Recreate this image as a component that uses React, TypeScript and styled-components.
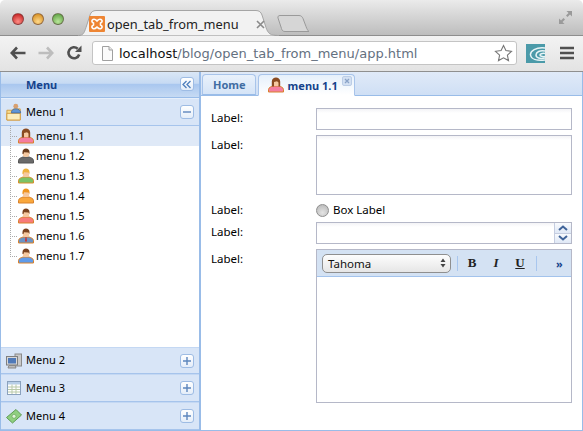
import React from "react";
import styled, { createGlobalStyle } from "styled-components";

const Global = createGlobalStyle`
  html, body { margin: 0; padding: 0; background: #fff; }
  * { box-sizing: border-box; }
`;

const UI = `"DejaVu Sans", Verdana, sans-serif`;
const TAHOMA = `"Noto Sans", "DejaVu Sans", sans-serif`;

const Page = styled.div`
  width: 583px; height: 431px; overflow: hidden; display: flex; flex-direction: column;
  background: #fff; font-family: ${TAHOMA};
`;
const TitleBar = styled.div`
  height: 36px; flex: none; display: flex; align-items: flex-end; padding-left: 10px;
  background: linear-gradient(#ebebeb, #d8d8d8 40%, #bdbdbd);
  border-bottom: 1px solid #8e8e8e; border-radius: 5px 5px 0 0;
`;
const Lights = styled.div`
  display: flex; gap: 8px; width: 66px; align-self: flex-start; margin: 13px 0 0 2px; flex: none;
`;
const Light = styled.span<{ $c: string; $d: string }>`
  width: 12px; height: 12px; border-radius: 50%;
  background: radial-gradient(circle at 50% 75%, ${p => p.$c}, ${p => p.$d} 80%);
  border: 1px solid rgba(90, 60, 60, .55);
`;
const Tab = styled.div`
  position: relative; width: 201px; height: 26px; flex: none; margin-bottom: -1px;
  display: flex; align-items: center; padding: 2px 14px 0 11px;
  font-size: 12.8px; color: #222;
`;
const Shape = styled.svg`
  position: absolute; left: 0; top: 0;
`;
const TabTitle = styled.span`
  position: relative; flex: 1; margin-left: 2px; white-space: nowrap;
`;
const TabIcon = styled.svg`
  position: relative; flex: none;
`;
const NewTab = styled.svg`
  flex: none; margin: 0 0 3px -2px;
`;
const Spacer = styled.div`flex: 1;`;
const FullIcon = styled.svg`
  align-self: flex-start; margin: 10px 10px 0 0; flex: none;
`;
const Toolbar = styled.div`
  height: 36px; flex: none; display: flex; align-items: center; padding: 0 10px 1px 10px;
  background: linear-gradient(#f3f3f3, #e3e3e3); border-bottom: 1px solid #8f8f8f;
`;
const NavIcon = styled.svg`
  flex: none; margin-right: 12px;
`;
const Address = styled.div`
  width: 425px; height: 24px; margin-left: -2px; flex: none; display: flex; align-items: center;
  background: #fff; border: 1px solid #c4c4c4; border-radius: 3px; padding: 0 3px 0 8px;
  font-family: ${UI}; font-size: 13px; color: #64707f; white-space: nowrap;
`;
const Host = styled.span`color: #111;`;
const Url = styled.span`flex: 1; margin-left: 5px;`;
const Ext = styled.svg`
  margin-left: 9px; flex: none;
`;
const Burger = styled.svg`
  margin-left: 15px; flex: none;
`;
const Main = styled.div`
  flex: 1; display: flex; min-height: 0;
`;
const Sidebar = styled.aside`
  width: 200px; flex: none; display: flex; flex-direction: column;
  border: 1px solid #99bce8; border-width: 0 1px 1px 1px;
`;
const SideHead = styled.div`
  height: 26px; flex: none; display: flex; align-items: center; justify-content: space-between;
  padding: 0 5px 1px 25px; font-weight: bold; font-size: 11px; color: #15428b;
  background: linear-gradient(#dae7f6, #c6daf3 45%, #a9c7ef 50%, #c6daf3);
  border-bottom: 1px solid #99bce8;
`;
const ToolBtn = styled.span`
  width: 14px; height: 14px; flex: none; display: flex; align-items: center; justify-content: center;
  background: linear-gradient(#fff, #e4edf9); border: 1px solid #9ebce4; border-radius: 3px;
`;
const Accordion = styled.div<{ $top?: boolean; $h: number }>`
  height: ${p => p.$h}px; flex: none; display: flex; align-items: center;
  padding: 0 5px 0 5px; font-size: 11px; color: #000;
  background: #d8e5f7; border-bottom: 1px solid #a6c4ec;
  border-top: 1px solid ${p => (p.$top ? "#e6effb" : "#c4d8f3")};
`;
const AccTitle = styled.span`flex: 1; margin-left: 4px; padding-bottom: 2px;`;
const Tree = styled.ul`
  flex: 1; list-style: none; margin: 0; padding: 0;
`;
const TreeRow = styled.li<{ $sel?: boolean }>`
  height: 20px; display: flex; align-items: center; padding-left: 9px; font-size: 11px; color: #000;
  background: ${p => (p.$sel ? "#dfe9f7" : "transparent")};
`;
const Elbow = styled.span<{ $last?: boolean }>`
  align-self: flex-start; flex: none; width: 8px; height: ${p => (p.$last ? 11 : 20)}px;
  background:
    repeating-linear-gradient(to bottom, #aaa 0 1px, transparent 1px 2px) left top / 1px 100% no-repeat,
    repeating-linear-gradient(to right, #aaa 0 1px, transparent 1px 2px) left 10px / 100% 1px no-repeat;
`;
const TreeText = styled.span`margin-left: 2px; padding-bottom: 2px;`;
const Content = styled.section`
  flex: 1; display: flex; flex-direction: column; min-width: 0;
  border: 1px solid #99bce8; border-width: 0 1px 1px 1px;
`;
const TabBar = styled.div`
  height: 24px; flex: none; display: flex; align-items: flex-end; gap: 2px; padding-left: 1px;
  background: linear-gradient(#e0eaf8, #cfdff5); border-bottom: 1px solid #99bce8;
`;
const PanelTab = styled.div<{ $active?: boolean }>`
  height: ${p => (p.$active ? 22 : 21)}px; margin-bottom: ${p => (p.$active ? -1 : 0)}px;
  display: flex; align-items: center; padding: ${p => (p.$active ? "0 2px 0 9px" : "0 9px 0 10px")};
  border: 1px solid #a8c4ea; border-bottom-color: ${p => (p.$active ? "#fff" : "#99bce8")};
  border-radius: 4px 4px 0 0; font-weight: bold; font-size: 11px;
  color: ${p => (p.$active ? "#15428b" : "#416da3")};
  background: ${p => (p.$active ? "linear-gradient(#e6f0fb, #fff)" : "linear-gradient(#e9f1fb, #d5e4f7)")};
`;
const PanelTabText = styled.span`margin-left: 4px;`;
const Close = styled.span`
  width: 10px; height: 10px; margin: -8px 0 0 4px; flex: none; display: flex; align-items: center; justify-content: center;
  background: #d3e0f2; border: 1px solid #bccde6; border-radius: 2px;
`;
const Form = styled.div`
  flex: 1; display: flex; flex-direction: column; gap: 5px; padding: 12px 10px 0 10px;
`;
const Row = styled.div`
  display: flex; align-items: flex-start;
`;
const Label = styled.label<{ $top: number }>`
  width: 105px; flex: none; font-size: 11.5px; line-height: 14px; color: #000; padding-top: ${p => p.$top}px;
`;
const Input = styled.div<{ $h: number }>`
  flex: 1; height: ${p => p.$h}px; border: 1px solid #b5b8c8;
  background: linear-gradient(#f3f3f6, #fff 4px);
`;
const RadioWrap = styled.div`
  display: flex; align-items: center; height: 17px; font-size: 11.5px; color: #000;
`;
const Radio = styled.span`
  width: 13px; height: 13px; border-radius: 50%; margin: 3px 4px 0 0;
  border: 1px solid #8e8e8e; background: radial-gradient(circle at 50% 70%, #e4e4e4, #b4b4b4);
`;
const RadioText = styled.span`padding-top: 1px;`;
const Spinner = styled.div`
  flex: 1; height: 22px; display: flex; border: 1px solid #b5b8c8;
  background: linear-gradient(#f3f3f6, #fff 4px);
`;
const SpinField = styled.div`flex: 1;`;
const SpinBtns = styled.div`
  width: 17px; display: flex; flex-direction: column; border-left: 1px solid #c5cde0;
`;
const SpinBtn = styled.span`
  flex: 1; display: flex; align-items: center; justify-content: center;
  background: linear-gradient(#f8fafd, #dfe8f6);
  & + & { border-top: 1px solid #c5cde0; }
`;
const Editor = styled.div`
  flex: 1; height: 154px; display: flex; flex-direction: column; border: 1px solid #b5b8c8;
`;
const EdBar = styled.div`
  height: 27px; flex: none; display: flex; align-items: center; padding: 0 5px;
  background: #d4e2f3; border-bottom: 1px solid #a3c3ec;
`;
const FontSelect = styled.div`
  width: 129px; height: 19px; flex: none; display: flex; align-items: center; justify-content: space-between;
  padding: 0 4px 0 5px; font-size: 11.5px; color: #111;
  background: linear-gradient(#fdfdfd, #e6e6e6); border: 1px solid #8f8f8f; border-radius: 5px;
`;
const Sep = styled.span<{ $l: number; $r: number }>`
  width: 1px; height: 15px; flex: none; background: #a8c6ee; margin: 0 ${p => p.$r}px 0 ${p => p.$l}px;
`;
const FmtBtn = styled.span<{ $i?: boolean; $u?: boolean }>`
  width: 24px; flex: none; text-align: center; font: bold 13px "Liberation Serif", serif; color: #222;
  font-style: ${p => (p.$i ? "italic" : "normal")};
  text-decoration: ${p => (p.$u ? "underline" : "none")};
`;
const More = styled.span`
  margin-left: 19px; font-size: 11px; font-weight: bold; color: #15428b; line-height: 1;
`;
const EdBody = styled.div`flex: 1; background: #fff;`;

type AvatarProps = { hair: string; shirt: string; dark: string; long?: boolean; tie?: boolean };
const Avatar = ({ hair, shirt, dark, long, tie }: AvatarProps) => (
  <svg width="16" height="16" viewBox="0 0 16 16" style={{ flex: "none" }}>
    <path d="M.5 15v-2.500c0-2 3-3 4.500-3.500h6c1.500.5 4.500 1.500 4.500 3.500V15z" fill={shirt} stroke={dark} strokeWidth="1" />
    {tie && <path d="M7.500 9h1l.500 4-1 1-1-1z" fill="#c33" />}
    <rect x="4.800" y="2" width="6.400" height="7" rx="2.500" fill="#f6c9a0" />
    <path d={long ? "M3.800 9.500V4.500C3.800 2 6 .5 8 .5s4.200 1.500 4.200 4V9.500h-1.700V5.500L9 4.300 6 5v4.500z" : "M4.500 6V4C4.500 1.800 6 .5 8 .5S11.500 1.800 11.500 4v2l-1-1.500L6 4.300 5.500 6z"} fill={hair} />
  </svg>
);

const Plus = () => (
  <svg width="8" height="8" viewBox="0 0 8 8"><path d="M0 4h8M4 0v8" stroke="#5d86bd" strokeWidth="1.400" /></svg>
);

const PlusBtn = () => <ToolBtn><Plus /></ToolBtn>;

const FolderIcon = () => (
  <svg width="16" height="18" viewBox="0 0 18 20" style={{ flex: "none" }}>
    <path d="M1 8h6l1.500-1.500H16V19H1z" fill="#f7dd8e" stroke="#d39a3a" />
    <path d="M1 11.500h15V19H1z" fill="#fbeebd" stroke="#d39a3a" />
    <circle cx="11" cy="3.500" r="2.700" fill="#d8a070" />
    <path d="M6 11c0-3 2-4.500 5-4.500s5.500 1.500 5.500 4.500z" fill="#5f97d8" stroke="#496f9f" />
  </svg>
);
const ComputerIcon = () => (
  <svg width="16" height="16" viewBox="0 0 16 16" style={{ flex: "none" }}>
    <rect x="9" y="1" width="6.500" height="12" fill="#c9c9c9" stroke="#8a8a8a" />
    <rect x=".5" y="3.500" width="11" height="8.500" fill="#d8d8d8" stroke="#7f7f7f" />
    <rect x="2" y="5" width="8" height="5.500" fill="#4f79b8" />
    <path d="M3 12.500h6l1 2.500H2z" fill="#bbb" stroke="#888" />
  </svg>
);
const TableIcon = () => (
  <svg width="14" height="14" viewBox="0 0 14 14" style={{ flex: "none", margin: "0 1px" }}>
    <rect x=".5" y=".5" width="13" height="13" fill="#fff" stroke="#8aa1bd" />
    <rect x="1" y="1" width="12" height="2.500" fill="#b8cfe8" />
    <path d="M1 6h12M1 8.500h12M1 11h12M5 3.500V13M9 3.500V13" stroke="#b9c9a9" strokeWidth="1" />
  </svg>
);
const MoneyIcon = () => (
  <svg width="16" height="16" viewBox="0 0 16 16" style={{ flex: "none" }}>
    <path d="M0.500 9.500 10 1.500l5.500 5.500-9 8z" fill="#8fcf80" stroke="#5e9c52" />
    <circle cx="8" cy="8.300" r="2" fill="#dff3d8" stroke="#5e9c52" strokeWidth=".6" />
  </svg>
);

const users: (AvatarProps & { t: string })[] = [
  { t: "menu 1.1", hair: "#8a4b22", shirt: "#f47da0", dark: "#d9822c", long: true },
  { t: "menu 1.2", hair: "#6b3d1c", shirt: "#6a6a6a", dark: "#555" },
  { t: "menu 1.3", hair: "#eeb13d", shirt: "#7cc266", dark: "#d98e2c" },
  { t: "menu 1.4", hair: "#ee9420", shirt: "#f9a73c", dark: "#d9822c" },
  { t: "menu 1.5", hair: "#7b4320", shirt: "#f77b7b", dark: "#d9822c" },
  { t: "menu 1.6", hair: "#7b4320", shirt: "#6b93c4", dark: "#d9822c", tie: true },
  { t: "menu 1.7", hair: "#7b4320", shirt: "#5f9bea", dark: "#d9822c" },
];

export default function App() {
  return (
    <Page>
      <Global />
      <TitleBar>
        <Lights>
          <Light $c="#ff8d85" $d="#c92a2a" />
          <Light $c="#ffd98a" $d="#d9952a" />
          <Light $c="#b9e69a" $d="#66a84c" />
        </Lights>
        <Tab>
          <Shape width="201" height="26" viewBox="0 0 201 26">
            <path d="M0 25.500c5 0 6-2 8-8L12 5c1-3 3-4.500 6-4.500h160c3 0 5 1.500 6 4.500l4 12.500c2 6 4 8 13 8" fill="#f2f2f2" stroke="#a5a5a5" />
          </Shape>
          <TabIcon width="16" height="16" viewBox="0 0 16 16">
            <rect width="16" height="16" rx="1" fill="#ee8533" />
            <path d="M4 3.500c2-1 3 .5 4 1.500 1-1 2-2.500 4-1.500s1 3-.5 3.500V9c1.500.5 2.500 2.500.5 3.500S9 12 8 11c-1 1-2 2.500-4 1.500S3 9.500 4.500 9V7C3 6.500 2 4.500 4 3.500z" fill="none" stroke="#fff" strokeWidth="1.600" />
          </TabIcon>
          <TabTitle>open_tab_from_menu</TabTitle>
          <TabIcon width="9" height="9" viewBox="0 0 9 9">
            <path d="M1 1l7 7M8 1l-7 7" stroke="#8a8a8a" strokeWidth="1.600" />
          </TabIcon>
        </Tab>
        <NewTab width="32" height="17" viewBox="0 0 32 17">
          <path d="M3 .5h19c2 0 3 1 4 3l3 8c1 3 2 4 3 5H8c-2 0-3-1-3.500-3L1 3C.5 1.500 1.500.5 3 .5z" fill="#d6d6d6" stroke="#9a9a9a" />
        </NewTab>
        <Spacer />
        <FullIcon width="15" height="15" viewBox="0 0 15 15">
          <path d="M8.500 1H14v5.500L12 4.500 9.500 7 8 5.500 10.500 3zM1 8.500V14h5.500l-2-2L7 9.500 5.500 8 3 10.500z" fill="#9a9a9a" />
        </FullIcon>
      </TitleBar>
      <Toolbar>
        <NavIcon width="16" height="14" viewBox="0 0 16 14">
          <path d="M7 1.500 1.800 7 7 12.500M2 7h13.500" fill="none" stroke="#505050" strokeWidth="2.600" />
        </NavIcon>
        <NavIcon width="16" height="14" viewBox="0 0 16 14">
          <path d="M9 1.500 14.200 7 9 12.500M14 7H.5" fill="none" stroke="#bdbdbd" strokeWidth="2.600" />
        </NavIcon>
        <NavIcon width="16" height="16" viewBox="0 0 16 16">
          <path d="M13.200 9.500A5.500 5.500 0 1 1 11.700 3.700" fill="none" stroke="#505050" strokeWidth="2.600" />
          <path d="M9 7h6.500V.5z" fill="#505050" />
        </NavIcon>
        <Address>
          <svg width="13" height="15" viewBox="0 0 13 15" style={{ flex: "none" }}>
            <path d="M1.500.5h6.500l3.500 3.500v10.500h-10z" fill="#fbfbfb" stroke="#a0a0a0" />
            <path d="M8 .5V4h3.500" fill="#e8e8e8" stroke="#a0a0a0" />
          </svg>
          <Url><Host>localhost</Host>/blog/open_tab_from_menu/app.html</Url>
          <svg width="19" height="18" viewBox="0 0 19 18" style={{ flex: "none" }}>
            <path d="M9.500 1.500l2.400 5.100 5.600.7-4.100 3.800 1.100 5.500-5-2.800-5 2.800 1.100-5.500L1.500 7.300l5.600-.7z" fill="#fff" stroke="#777" strokeWidth="1.100" />
          </svg>
        </Address>
        <Ext width="19" height="19" viewBox="0 0 19 19">
          <rect width="19" height="19" fill="#4b9aa9" />
          <path d="M19 4C10 3 4 7 4.500 11c.5 4 6 6 14.500 5" fill="none" stroke="#e8f4f6" strokeWidth="1.500" />
          <path d="M19 7c-5-1-9 1-9 4s4 4 9 3" fill="none" stroke="#e8f4f6" strokeWidth="1.500" />
          <path d="M19 9.500c-3-.5-5 .5-5 1.500s2 2 5 1.500" fill="none" stroke="#e8f4f6" strokeWidth="1.500" />
        </Ext>
        <Burger width="14" height="14" viewBox="0 0 14 14">
          <path d="M0 2h14M0 7h14M0 12h14" stroke="#505050" strokeWidth="2.400" />
        </Burger>
      </Toolbar>
      <Main>
        <Sidebar>
          <SideHead>
            Menu
            <ToolBtn>
              <svg width="10" height="9" viewBox="0 0 10 9"><path d="M4.500 1 1 4.500 4.500 8M8.500 1 5 4.500 8.500 8" fill="none" stroke="#4f7fbd" strokeWidth="1.300" /></svg>
            </ToolBtn>
          </SideHead>
          <Accordion $top $h={28}>
            <FolderIcon />
            <AccTitle>Menu 1</AccTitle>
            <ToolBtn><svg width="8" height="8" viewBox="0 0 8 8"><path d="M0 4h8" stroke="#5d86bd" strokeWidth="1.400" /></svg></ToolBtn>
          </Accordion>
          <Tree>
            {users.map((u, i) => (
              <TreeRow key={u.t} $sel={i === 0}>
                <Elbow $last={i === users.length - 1} />
                <Avatar {...u} />
                <TreeText>{u.t}</TreeText>
              </TreeRow>
            ))}
          </Tree>
          <Accordion $h={27}><ComputerIcon /><AccTitle>Menu 2</AccTitle><PlusBtn /></Accordion>
          <Accordion $h={28}><TableIcon /><AccTitle>Menu 3</AccTitle><PlusBtn /></Accordion>
          <Accordion $h={28}><MoneyIcon /><AccTitle>Menu 4</AccTitle><PlusBtn /></Accordion>
        </Sidebar>
        <Content>
          <TabBar>
            <PanelTab>Home</PanelTab>
            <PanelTab $active>
              <Avatar {...users[0]} />
              <PanelTabText>menu 1.1</PanelTabText>
              <Close>
                <svg width="6" height="6" viewBox="0 0 6 6"><path d="M1 1l4 4M5 1 1 5" stroke="#8aa3c7" strokeWidth="1.300" /></svg>
              </Close>
            </PanelTab>
          </TabBar>
          <Form>
            <Row><Label $top={3}>Label:</Label><Input $h={22} /></Row>
            <Row><Label $top={3}>Label:</Label><Input $h={60} /></Row>
            <Row>
              <Label $top={3}>Label:</Label>
              <RadioWrap><Radio /><RadioText>Box Label</RadioText></RadioWrap>
            </Row>
            <Row>
              <Label $top={3}>Label:</Label>
              <Spinner>
                <SpinField />
                <SpinBtns>
                  <SpinBtn><svg width="10" height="6" viewBox="0 0 10 6"><path d="M1 5 5 1.500 9 5" fill="none" stroke="#3f6399" strokeWidth="2" /></svg></SpinBtn>
                  <SpinBtn><svg width="10" height="6" viewBox="0 0 10 6"><path d="M1 1 5 4.500 9 1" fill="none" stroke="#3f6399" strokeWidth="2" /></svg></SpinBtn>
                </SpinBtns>
              </Spinner>
            </Row>
            <Row>
              <Label $top={3}>Label:</Label>
              <Editor>
                <EdBar>
                  <FontSelect>
                    Tahoma
                    <svg width="6" height="10" viewBox="0 0 6 10"><path d="M3 .5 5.500 4H.5zM3 9.500.5 6h5z" fill="#444" /></svg>
                  </FontSelect>
                  <Sep $l={6} $r={2} />
                  <FmtBtn>B</FmtBtn>
                  <FmtBtn $i>I</FmtBtn>
                  <FmtBtn $u>U</FmtBtn>
                  <Sep $l={4} $r={0} />
                  <More>»</More>
                </EdBar>
                <EdBody />
              </Editor>
            </Row>
          </Form>
        </Content>
      </Main>
    </Page>
  );
}
